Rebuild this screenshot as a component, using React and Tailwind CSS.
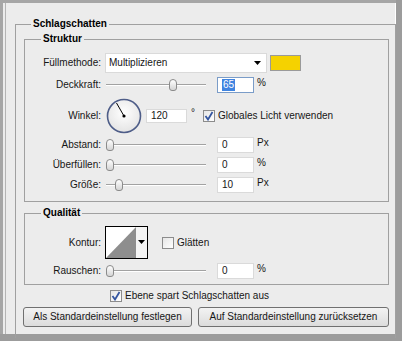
import React from 'react'

// Photoshop-ish "Schlagschatten" layer style panel

function Label({ children }) {
  return <div className="w-[76px] shrink-0 text-right">{children}</div>
}

function Slider({ pos }) {
  return (
    <div className="relative ml-[5px] flex h-[14px] w-[100px] items-center">
      <div className="h-[2px] w-full border-t border-[#a2a2a2] border-b border-b-white" />
      <div
        className="absolute top-[1px] h-[12px] w-[8px] rounded-t-[4px] rounded-b-[3px] border border-[#8b8b8b] bg-gradient-to-b from-white to-[#d4d4d4]"
        style={{ left: pos }}
      />
    </div>
  )
}

function NumInput({ value, unit, selected }) {
  return (
    <div className="ml-[11px] flex items-center">
      <div
        className={`flex h-[16px] w-[37px] items-center border bg-white pl-[4px] ${
          selected ? 'border-[#7a9cc8]' : 'border-[#dadada]'
        }`}
      >
        {selected ? <span className="bg-[#3f84e0] px-[1px] text-white">{value}</span> : <span>{value}</span>}
      </div>
      <span className="ml-[3px] -mt-[4px]">{unit}</span>
    </div>
  )
}

function Check({ checked }) {
  return (
    <div className="flex h-[12px] w-[12px] items-center justify-center border border-[#8c8c8c] bg-gradient-to-br from-[#e6e6e6] to-white">
      {checked && (
        <svg width="10" height="10" viewBox="0 0 10 10">
          <path d="M1.5 5 L4 8.5 L8.5 1" fill="none" stroke="#3556a0" strokeWidth="1.8" />
        </svg>
      )}
    </div>
  )
}

function Dial() {
  return (
    <svg width="36" height="36" viewBox="0 0 36 36" className="ml-[5px]">
      <defs>
        <radialGradient id="dg" cx="50%" cy="40%" r="60%">
          <stop offset="0%" stopColor="#ffffff" />
          <stop offset="100%" stopColor="#e4e4e4" />
        </radialGradient>
      </defs>
      <circle cx="18" cy="18" r="16.5" fill="url(#dg)" stroke="#4e5d88" strokeWidth="1.6" />
      <line x1="18" y1="18" x2="10.5" y2="5" stroke="#000" strokeWidth="1" />
      <circle cx="18" cy="18" r="1.6" fill="#000" />
    </svg>
  )
}

function Group({ title, className = '', children, legendMl = 'ml-[16px]' }) {
  return (
    <fieldset className={`border border-[#a0a0a0] ${className}`}>
      <legend className={`${legendMl} px-[2px] text-[10px] font-bold leading-[12px] text-black`}>{title}</legend>
      {children}
    </fieldset>
  )
}

export default function App() {
  return (
    <div className="h-[341px] w-[402px] overflow-hidden bg-[#9c9c9c] font-['Liberation_Sans',Arial,sans-serif] text-[10px] leading-[12px] text-[#161616]">
      <div className="h-[334px] w-[396px] border-t-[3px] border-l-[3px] border-[#a6a6a6] bg-[#ececec] pl-[2px]">
        <div className="h-full border-l border-[#b4b4b4] border-r border-r-white pl-[9px] pr-[1px] pt-[15px]">
          <Group title="Schlagschatten" legendMl="ml-[7px]" className="h-[320px] border-b-0 pl-[8px] pr-[6px]">
            <Group title="Struktur" className="mt-[3px] pb-[8px]">
              <div className="mt-[8px] flex items-center">
                <Label>Füllmethode:</Label>
                <div className="ml-[4px] flex h-[20px] w-[162px] items-center justify-between border border-[#dadada] bg-white pl-[3px] pr-[5px]">
                  <span>Multiplizieren</span>
                  <svg width="7" height="4" viewBox="0 0 7 4">
                    <path d="M0 0 H7 L3.5 4 Z" fill="#000" />
                  </svg>
                </div>
                <div className="ml-[3px] h-[16px] w-[31px] border border-[#9a9a9a] bg-[#f5d200]" />
              </div>
              <div className="mt-[4px] flex items-center">
                <Label>Deckkraft:</Label>
                <Slider pos={63} />
                <NumInput value="65" unit="%" selected />
              </div>
              <div className="mt-[5px] flex items-center">
                <Label>Winkel:</Label>
                <Dial />
                <div className="ml-[4px] flex h-[14px] w-[41px] items-center border border-[#dadada] bg-white pl-[4px]">120</div>
                <span className="ml-[4px] -mt-[6px]">°</span>
                <div className="ml-[8px]">
                  <Check checked />
                </div>
                <span className="ml-[3px]">Globales Licht verwenden</span>
              </div>
              <div className="mt-[3px] flex items-center">
                <Label>Abstand:</Label>
                <Slider pos={0} />
                <NumInput value="0" unit="Px" />
              </div>
              <div className="mt-[4px] flex items-center">
                <Label>Überfüllen:</Label>
                <Slider pos={0} />
                <NumInput value="0" unit="%" />
              </div>
              <div className="mt-[4px] flex items-center">
                <Label>Größe:</Label>
                <Slider pos={9} />
                <NumInput value="10" unit="Px" />
              </div>
            </Group>

            <Group title="Qualität" className="mt-[5px] pb-[5px]">
              <div className="mt-[7px] flex items-center">
                <Label>Kontur:</Label>
                <div className="ml-[4px] flex h-[33px] w-[43px] border border-black bg-[#f4f4f4]">
                  <svg width="30" height="31" viewBox="0 0 30 31" className="shrink-0">
                    <rect width="30" height="31" fill="#fff" />
                    <path d="M0 31 L30 0 V31 Z" fill="#8e8e8e" />
                  </svg>
                  <div className="flex flex-1 items-start justify-center pt-[13px]">
                    <svg width="7" height="4" viewBox="0 0 7 4">
                      <path d="M0 0 H7 L3.5 4 Z" fill="#000" />
                    </svg>
                  </div>
                </div>
                <div className="ml-[14px]">
                  <Check />
                </div>
                <span className="ml-[3px]">Glätten</span>
              </div>
              <div className="mt-[4px] flex items-center">
                <Label>Rauschen:</Label>
                <Slider pos={0} />
                <NumInput value="0" unit="%" />
              </div>
            </Group>

            <div className="mt-[5px] flex items-center pl-[86px]">
              <Check checked />
              <span className="ml-[3px]">Ebene spart Schlagschatten aus</span>
            </div>
            <div className="mt-[5px] flex gap-[6px] pl-[-1px]">
              <button className="-ml-[1px] h-[20px] w-[169px] rounded-[3px] border border-[#707070] bg-gradient-to-b from-[#f3f3f3] to-[#dcdcdc] text-[10px] text-[#161616]">
                Als Standardeinstellung festlegen
              </button>
              <button className="h-[20px] w-[191px] rounded-[3px] border border-[#707070] bg-gradient-to-b from-[#f3f3f3] to-[#dcdcdc] text-[10px] text-[#161616]">
                Auf Standardeinstellung zurücksetzen
              </button>
            </div>
          </Group>
        </div>
      </div>
    </div>
  )
}
